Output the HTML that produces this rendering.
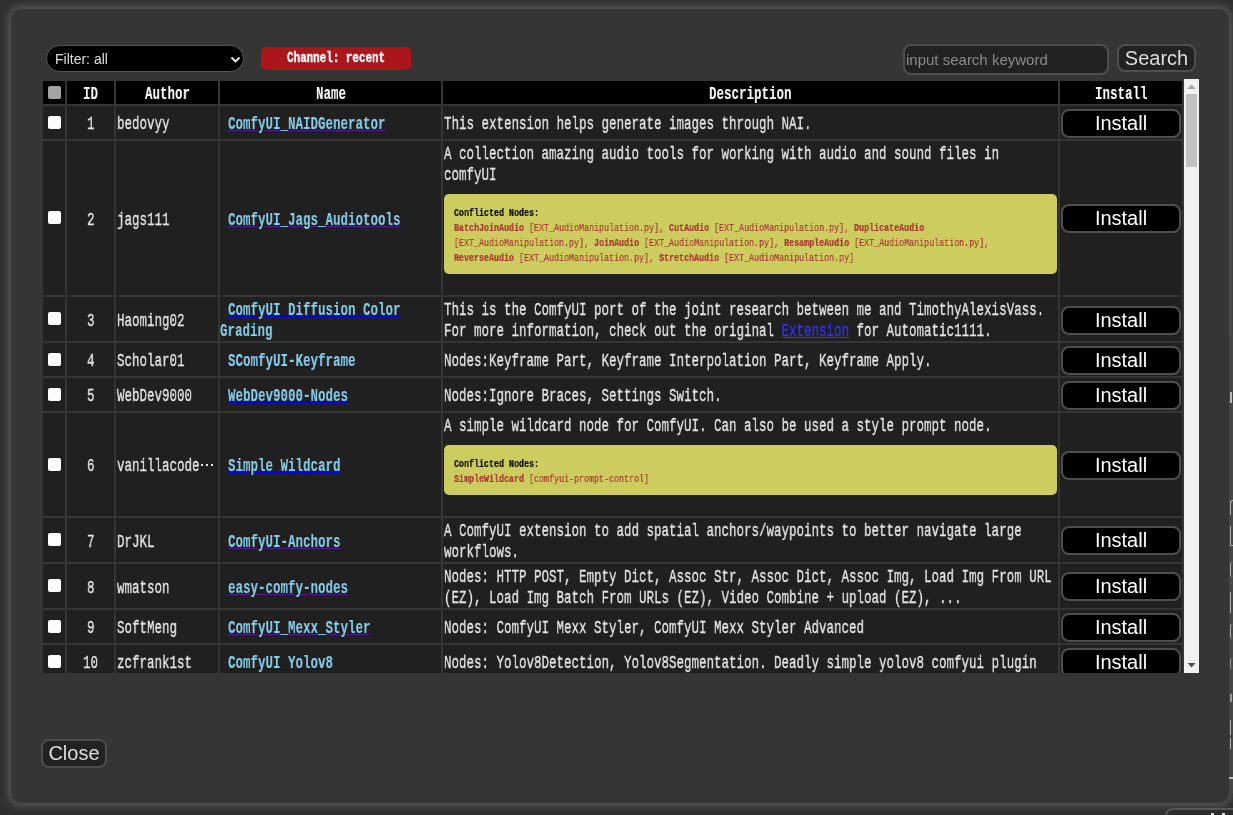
<!DOCTYPE html>
<html><head><meta charset="utf-8">
<style>
html,body{margin:0;padding:0;width:1233px;height:815px;overflow:hidden;background:#2e2e2e;}
#bg{position:absolute;left:0;top:0;width:1233px;height:815px;background:#2f2f2f;}
#dlg{position:absolute;left:11px;top:9px;width:1218px;height:794px;background:#353535;border-radius:10px;box-shadow:0 0 8px 3px rgba(130,130,130,0.5);overflow:hidden;}
.m{position:absolute;white-space:pre;font-family:"Liberation Mono",monospace;line-height:1.1328;transform-origin:0 0;will-change:transform;-webkit-text-stroke:0.35px currentColor;}
.b{position:absolute;}
.ib{position:absolute;left:1061px;width:116px;height:25px;background:#000;border:2px solid #4e4e4e;border-radius:8px;color:#fff;font-family:"Liberation Sans",sans-serif;font-size:20px;line-height:25px;text-align:center;}
.sans{font-family:"Liberation Sans",sans-serif;}
</style></head><body>
<div id="bg"></div>
<div id="dlg"></div>
<div class="b" style="left:1165px;top:808px;width:90px;height:20px;background:#2c2c2c;border:2px solid #575757;border-radius:8px;"></div>
<div class="b" style="left:1211px;top:813px;width:3px;height:2px;background:#ddd;"></div>
<div class="b" style="left:1222px;top:813px;width:3px;height:2px;background:#ddd;"></div>
<div class="b" style="left:1229px;top:335px;width:4px;height:458px;background:#464646;"></div>
<div class="b" style="left:1230px;top:392px;width:2px;height:11px;background:#bbb;"></div>
<div class="b" style="left:1230px;top:500px;width:3px;height:15px;border-left:1.5px solid #aaa;border-top:1.5px solid #aaa;box-sizing:border-box;border-radius:3px 0 0 0;"></div>
<div class="b" style="left:1230px;top:526px;width:3px;height:20px;border-left:1.5px solid #aaa;border-bottom:1.5px solid #aaa;box-sizing:border-box;"></div>
<div class="b" style="left:1230px;top:562px;width:3px;height:15px;border-left:1.5px solid #aaa;border-radius:3px 0 0 3px;box-sizing:border-box;"></div>
<div class="b" style="left:1230px;top:592px;width:3px;height:21px;border-left:1.5px solid #aaa;box-sizing:border-box;"></div>
<div class="b" style="left:1230px;top:624px;width:3px;height:15px;border-left:1.5px solid #aaa;border-radius:3px 0 0 3px;box-sizing:border-box;"></div>
<div class="b" style="left:1230px;top:658px;width:3px;height:11px;border-left:1.5px solid #999;border-radius:3px 0 0 3px;box-sizing:border-box;"></div>
<div class="b" style="left:1230px;top:694px;width:2px;height:8px;background:#999;"></div>
<div class="b" style="left:1230px;top:720px;width:3px;height:15px;border-left:1.5px solid #aaa;box-sizing:border-box;"></div>
<div class="b" style="left:1230px;top:738px;width:3px;height:11px;border-left:1.5px solid #aaa;box-sizing:border-box;"></div>
<div class="b" style="left:1229px;top:777px;width:4px;height:2px;background:#bbb;"></div>

<div style="position:absolute;left:0;top:0;width:1233px;height:815px;will-change:transform;">
<!-- filter select -->
<div class="b" style="left:46px;top:45px;width:196px;height:25px;background:#000;border:1px solid #555;border-radius:14px;"></div>
<div class="b sans" style="left:55px;top:50px;font-size:14px;line-height:18px;color:#ddd;">Filter: all</div>
<svg class="b" style="left:229px;top:55px;" width="13" height="9" viewBox="0 0 13 9"><path d="M2.5 2.5 L6.5 6.5 L10.5 2.5" stroke="#eee" stroke-width="1.8" fill="none"/></svg>
<!-- channel -->
<div class="b" style="left:261px;top:47px;width:150px;height:23px;background:#ab161b;border-radius:5px;"></div>
<div class="m" style="left:287px;top:50.13px;font-size:14.5px;transform:scaleX(0.7517);color:#fff;font-weight:bold;">Channel: recent</div>
<!-- search -->
<div class="b" style="left:903px;top:44px;width:202px;height:27px;background:#222;border:2px solid #4e4e4e;border-radius:8px;"></div>
<div class="b sans" style="left:906px;top:51px;font-size:15px;line-height:18px;color:#8a8a8a;">input search keyword</div>
<div class="b" style="left:1117px;top:44px;width:75px;height:24px;background:#222;border:2px solid #4e4e4e;border-radius:8px;"></div>
<div class="b sans" style="left:1117px;top:44px;width:79px;text-align:center;font-size:20px;line-height:28px;color:#ddd;">Search</div>
<!-- close -->
<div class="b" style="left:41px;top:739px;width:62px;height:25px;background:#222;border:2px solid #4e4e4e;border-radius:8px;"></div>
<div class="b sans" style="left:41px;top:739px;width:66px;text-align:center;font-size:20px;line-height:29px;color:#ddd;">Close</div>
<div class="b" style="left:43px;top:81px;width:22px;height:23px;background:#000;"></div><div class="b" style="left:67px;top:81px;width:47px;height:23px;background:#000;"></div><div class="b" style="left:116px;top:81px;width:102px;height:23px;background:#000;"></div><div class="b" style="left:220px;top:81px;width:221px;height:23px;background:#000;"></div><div class="b" style="left:443px;top:81px;width:615px;height:23px;background:#000;"></div><div class="b" style="left:1060px;top:81px;width:122px;height:23px;background:#000;"></div><div class="m" style="left:83.00px;top:85.13px;font-size:17.5px;transform:scaleX(0.7143);color:#fff;font-weight:bold;-webkit-text-stroke:0.1px currentColor;">ID</div><div class="m" style="left:144.50px;top:85.13px;font-size:17.5px;transform:scaleX(0.7143);color:#fff;font-weight:bold;-webkit-text-stroke:0.1px currentColor;">Author</div><div class="m" style="left:315.50px;top:85.13px;font-size:17.5px;transform:scaleX(0.7143);color:#fff;font-weight:bold;-webkit-text-stroke:0.1px currentColor;">Name</div><div class="m" style="left:709.25px;top:85.13px;font-size:17.5px;transform:scaleX(0.7143);color:#fff;font-weight:bold;-webkit-text-stroke:0.1px currentColor;">Description</div><div class="m" style="left:1094.75px;top:85.13px;font-size:17.5px;transform:scaleX(0.7143);color:#fff;font-weight:bold;-webkit-text-stroke:0.1px currentColor;">Install</div><div class="b" style="left:48px;top:86px;width:13px;height:13px;background:#a3a3a3;border-radius:2px;"></div><div id="clip" style="position:absolute;left:0;top:0;width:1233px;height:673px;overflow:hidden;"><div class="b" style="left:43px;top:106px;width:22px;height:33px;background:#202020;"></div><div class="b" style="left:67px;top:106px;width:47px;height:33px;background:#202020;"></div><div class="b" style="left:116px;top:106px;width:102px;height:33px;background:#202020;"></div><div class="b" style="left:220px;top:106px;width:221px;height:33px;background:#202020;"></div><div class="b" style="left:443px;top:106px;width:615px;height:33px;background:#202020;"></div><div class="b" style="left:1060px;top:106px;width:122px;height:33px;background:#202020;"></div><div class="b" style="left:48px;top:116px;width:13px;height:13px;background:#fff;border-radius:2px;"></div><div class="m" style="left:86.75px;top:115.23px;font-size:17.5px;transform:scaleX(0.7143);color:#e6e6e6;">1</div><div class="m" style="left:117.00px;top:115.23px;font-size:17.5px;transform:scaleX(0.7143);color:#e6e6e6;">bedovyy</div><div class="m" style="left:227.90px;top:115.23px;font-size:17.5px;transform:scaleX(0.7143);color:skyblue;font-weight:bold;-webkit-text-stroke:0.1px currentColor;text-decoration:underline;text-decoration-color:#551A8B;">ComfyUI_NAIDGenerator</div><div class="m" style="left:444.00px;top:115.23px;font-size:17.5px;transform:scaleX(0.7143);color:#e6e6e6;">This extension helps generate images through NAI.</div><div class="ib" style="top:109px;">Install</div><div class="b" style="left:43px;top:141px;width:22px;height:154px;background:#202020;"></div><div class="b" style="left:67px;top:141px;width:47px;height:154px;background:#202020;"></div><div class="b" style="left:116px;top:141px;width:102px;height:154px;background:#202020;"></div><div class="b" style="left:220px;top:141px;width:221px;height:154px;background:#202020;"></div><div class="b" style="left:443px;top:141px;width:615px;height:154px;background:#202020;"></div><div class="b" style="left:1060px;top:141px;width:122px;height:154px;background:#202020;"></div><div class="b" style="left:48px;top:211px;width:13px;height:13px;background:#fff;border-radius:2px;"></div><div class="m" style="left:86.75px;top:210.73px;font-size:17.5px;transform:scaleX(0.7143);color:#e6e6e6;">2</div><div class="m" style="left:117.00px;top:210.73px;font-size:17.5px;transform:scaleX(0.7143);color:#e6e6e6;">jags111</div><div class="m" style="left:227.90px;top:210.73px;font-size:17.5px;transform:scaleX(0.7143);color:skyblue;font-weight:bold;-webkit-text-stroke:0.1px currentColor;text-decoration:underline;text-decoration-color:#551A8B;">ComfyUI_Jags_Audiotools</div><div class="m" style="left:444.00px;top:145.43px;font-size:17.5px;transform:scaleX(0.7143);color:#e6e6e6;">A collection amazing audio tools for working with audio and sound files in</div><div class="m" style="left:444.00px;top:166.43px;font-size:17.5px;transform:scaleX(0.7143);color:#e6e6e6;">comfyUI</div><div class="b" style="left:444px;top:194px;width:613px;height:80px;background:#CCCC5F;border-radius:5px;"></div><div class="m" style="left:454.00px;top:206.54px;font-size:11px;transform:scaleX(0.7576);-webkit-text-stroke:0.15px currentColor;"><span style="color:#000;font-weight:bold;">Conflicted Nodes:</span></div><div class="m" style="left:454.00px;top:221.54px;font-size:11px;transform:scaleX(0.7576);-webkit-text-stroke:0.15px currentColor;"><span style="color:#AA3333;font-weight:bold;">BatchJoinAudio</span><span style="color:#AA3333;"> [EXT_AudioManipulation.py], </span><span style="color:#AA3333;font-weight:bold;">CutAudio</span><span style="color:#AA3333;"> [EXT_AudioManipulation.py], </span><span style="color:#AA3333;font-weight:bold;">DuplicateAudio</span></div><div class="m" style="left:454.00px;top:236.54px;font-size:11px;transform:scaleX(0.7576);-webkit-text-stroke:0.15px currentColor;"><span style="color:#AA3333;">[EXT_AudioManipulation.py], </span><span style="color:#AA3333;font-weight:bold;">JoinAudio</span><span style="color:#AA3333;"> [EXT_AudioManipulation.py], </span><span style="color:#AA3333;font-weight:bold;">ResampleAudio</span><span style="color:#AA3333;"> [EXT_AudioManipulation.py],</span></div><div class="m" style="left:454.00px;top:251.54px;font-size:11px;transform:scaleX(0.7576);-webkit-text-stroke:0.15px currentColor;"><span style="color:#AA3333;font-weight:bold;">ReverseAudio</span><span style="color:#AA3333;"> [EXT_AudioManipulation.py], </span><span style="color:#AA3333;font-weight:bold;">StretchAudio</span><span style="color:#AA3333;"> [EXT_AudioManipulation.py]</span></div><div class="ib" style="top:204px;">Install</div><div class="b" style="left:43px;top:297px;width:22px;height:44px;background:#202020;"></div><div class="b" style="left:67px;top:297px;width:47px;height:44px;background:#202020;"></div><div class="b" style="left:116px;top:297px;width:102px;height:44px;background:#202020;"></div><div class="b" style="left:220px;top:297px;width:221px;height:44px;background:#202020;"></div><div class="b" style="left:443px;top:297px;width:615px;height:44px;background:#202020;"></div><div class="b" style="left:1060px;top:297px;width:122px;height:44px;background:#202020;"></div><div class="b" style="left:48px;top:312px;width:13px;height:13px;background:#fff;border-radius:2px;"></div><div class="m" style="left:86.75px;top:311.73px;font-size:17.5px;transform:scaleX(0.7143);color:#e6e6e6;">3</div><div class="m" style="left:117.00px;top:311.73px;font-size:17.5px;transform:scaleX(0.7143);color:#e6e6e6;">Haoming02</div><div class="m" style="left:227.90px;top:301.43px;font-size:17.5px;transform:scaleX(0.7143);color:skyblue;font-weight:bold;-webkit-text-stroke:0.1px currentColor;text-decoration:underline;text-decoration-color:#0000EE;">ComfyUI Diffusion Color</div><div class="m" style="left:220.40px;top:322.43px;font-size:17.5px;transform:scaleX(0.7143);color:skyblue;font-weight:bold;-webkit-text-stroke:0.1px currentColor;text-decoration:underline;text-decoration-color:#0000EE;">Grading</div><div class="m" style="left:444.00px;top:301.43px;font-size:17.5px;transform:scaleX(0.7143);color:#e6e6e6;">This is the ComfyUI port of the joint research between me and TimothyAlexisVass.</div><div class="m" style="left:444px;top:322.43px;font-size:17.5px;transform:scaleX(0.7143);color:#e6e6e6;">For more information, check out the original <span style="color:#3333ee;text-decoration:underline;">Extension</span> for Automatic1111.</div><div class="ib" style="top:306px;">Install</div><div class="b" style="left:43px;top:343px;width:22px;height:33px;background:#202020;"></div><div class="b" style="left:67px;top:343px;width:47px;height:33px;background:#202020;"></div><div class="b" style="left:116px;top:343px;width:102px;height:33px;background:#202020;"></div><div class="b" style="left:220px;top:343px;width:221px;height:33px;background:#202020;"></div><div class="b" style="left:443px;top:343px;width:615px;height:33px;background:#202020;"></div><div class="b" style="left:1060px;top:343px;width:122px;height:33px;background:#202020;"></div><div class="b" style="left:48px;top:353px;width:13px;height:13px;background:#fff;border-radius:2px;"></div><div class="m" style="left:86.75px;top:352.23px;font-size:17.5px;transform:scaleX(0.7143);color:#e6e6e6;">4</div><div class="m" style="left:117.00px;top:352.23px;font-size:17.5px;transform:scaleX(0.7143);color:#e6e6e6;">Scholar01</div><div class="m" style="left:227.90px;top:352.23px;font-size:17.5px;transform:scaleX(0.7143);color:skyblue;font-weight:bold;-webkit-text-stroke:0.1px currentColor;text-decoration:underline;text-decoration-color:#0000EE;">SComfyUI-Keyframe</div><div class="m" style="left:444.00px;top:352.23px;font-size:17.5px;transform:scaleX(0.7143);color:#e6e6e6;">Nodes:Keyframe Part, Keyframe Interpolation Part, Keyframe Apply.</div><div class="ib" style="top:346px;">Install</div><div class="b" style="left:43px;top:378px;width:22px;height:33px;background:#202020;"></div><div class="b" style="left:67px;top:378px;width:47px;height:33px;background:#202020;"></div><div class="b" style="left:116px;top:378px;width:102px;height:33px;background:#202020;"></div><div class="b" style="left:220px;top:378px;width:221px;height:33px;background:#202020;"></div><div class="b" style="left:443px;top:378px;width:615px;height:33px;background:#202020;"></div><div class="b" style="left:1060px;top:378px;width:122px;height:33px;background:#202020;"></div><div class="b" style="left:48px;top:388px;width:13px;height:13px;background:#fff;border-radius:2px;"></div><div class="m" style="left:86.75px;top:387.23px;font-size:17.5px;transform:scaleX(0.7143);color:#e6e6e6;">5</div><div class="m" style="left:117.00px;top:387.23px;font-size:17.5px;transform:scaleX(0.7143);color:#e6e6e6;">WebDev9000</div><div class="m" style="left:227.90px;top:387.23px;font-size:17.5px;transform:scaleX(0.7143);color:skyblue;font-weight:bold;-webkit-text-stroke:0.1px currentColor;text-decoration:underline;text-decoration-color:#0000EE;">WebDev9000-Nodes</div><div class="m" style="left:444.00px;top:387.23px;font-size:17.5px;transform:scaleX(0.7143);color:#e6e6e6;">Nodes:Ignore Braces, Settings Switch.</div><div class="ib" style="top:381px;">Install</div><div class="b" style="left:43px;top:413px;width:22px;height:103px;background:#202020;"></div><div class="b" style="left:67px;top:413px;width:47px;height:103px;background:#202020;"></div><div class="b" style="left:116px;top:413px;width:102px;height:103px;background:#202020;"></div><div class="b" style="left:220px;top:413px;width:221px;height:103px;background:#202020;"></div><div class="b" style="left:443px;top:413px;width:615px;height:103px;background:#202020;"></div><div class="b" style="left:1060px;top:413px;width:122px;height:103px;background:#202020;"></div><div class="b" style="left:48px;top:458px;width:13px;height:13px;background:#fff;border-radius:2px;"></div><div class="m" style="left:86.75px;top:457.23px;font-size:17.5px;transform:scaleX(0.7143);color:#e6e6e6;">6</div><div class="m" style="left:117.00px;top:457.23px;font-size:17.5px;transform:scaleX(0.7143);color:#e6e6e6;">vanillacode</div><div class="b" style="left:201px;top:464px;width:2px;height:2px;background:#e8e8e8;"></div><div class="b" style="left:206px;top:464px;width:2px;height:2px;background:#e8e8e8;"></div><div class="b" style="left:211px;top:464px;width:2px;height:2px;background:#e8e8e8;"></div><div class="m" style="left:227.90px;top:457.23px;font-size:17.5px;transform:scaleX(0.7143);color:skyblue;font-weight:bold;-webkit-text-stroke:0.1px currentColor;text-decoration:underline;text-decoration-color:#0000EE;">Simple Wildcard</div><div class="m" style="left:444.00px;top:417.43px;font-size:17.5px;transform:scaleX(0.7143);color:#e6e6e6;">A simple wildcard node for ComfyUI. Can also be used a style prompt node.</div><div class="b" style="left:444px;top:445px;width:613px;height:50px;background:#CCCC5F;border-radius:5px;"></div><div class="m" style="left:454.00px;top:457.54px;font-size:11px;transform:scaleX(0.7576);-webkit-text-stroke:0.15px currentColor;"><span style="color:#000;font-weight:bold;">Conflicted Nodes:</span></div><div class="m" style="left:454.00px;top:472.54px;font-size:11px;transform:scaleX(0.7576);-webkit-text-stroke:0.15px currentColor;"><span style="color:#AA3333;font-weight:bold;">SimpleWildcard</span><span style="color:#AA3333;"> [comfyui-prompt-control]</span></div><div class="ib" style="top:451px;">Install</div><div class="b" style="left:43px;top:518px;width:22px;height:44px;background:#202020;"></div><div class="b" style="left:67px;top:518px;width:47px;height:44px;background:#202020;"></div><div class="b" style="left:116px;top:518px;width:102px;height:44px;background:#202020;"></div><div class="b" style="left:220px;top:518px;width:221px;height:44px;background:#202020;"></div><div class="b" style="left:443px;top:518px;width:615px;height:44px;background:#202020;"></div><div class="b" style="left:1060px;top:518px;width:122px;height:44px;background:#202020;"></div><div class="b" style="left:48px;top:533px;width:13px;height:13px;background:#fff;border-radius:2px;"></div><div class="m" style="left:86.75px;top:532.73px;font-size:17.5px;transform:scaleX(0.7143);color:#e6e6e6;">7</div><div class="m" style="left:117.00px;top:532.73px;font-size:17.5px;transform:scaleX(0.7143);color:#e6e6e6;">DrJKL</div><div class="m" style="left:227.90px;top:532.73px;font-size:17.5px;transform:scaleX(0.7143);color:skyblue;font-weight:bold;-webkit-text-stroke:0.1px currentColor;text-decoration:underline;text-decoration-color:#551A8B;">ComfyUI-Anchors</div><div class="m" style="left:444.00px;top:522.43px;font-size:17.5px;transform:scaleX(0.7143);color:#e6e6e6;">A ComfyUI extension to add spatial anchors/waypoints to better navigate large</div><div class="m" style="left:444.00px;top:543.43px;font-size:17.5px;transform:scaleX(0.7143);color:#e6e6e6;">workflows.</div><div class="ib" style="top:526px;">Install</div><div class="b" style="left:43px;top:564px;width:22px;height:44px;background:#202020;"></div><div class="b" style="left:67px;top:564px;width:47px;height:44px;background:#202020;"></div><div class="b" style="left:116px;top:564px;width:102px;height:44px;background:#202020;"></div><div class="b" style="left:220px;top:564px;width:221px;height:44px;background:#202020;"></div><div class="b" style="left:443px;top:564px;width:615px;height:44px;background:#202020;"></div><div class="b" style="left:1060px;top:564px;width:122px;height:44px;background:#202020;"></div><div class="b" style="left:48px;top:579px;width:13px;height:13px;background:#fff;border-radius:2px;"></div><div class="m" style="left:86.75px;top:578.73px;font-size:17.5px;transform:scaleX(0.7143);color:#e6e6e6;">8</div><div class="m" style="left:117.00px;top:578.73px;font-size:17.5px;transform:scaleX(0.7143);color:#e6e6e6;">wmatson</div><div class="m" style="left:227.90px;top:578.73px;font-size:17.5px;transform:scaleX(0.7143);color:skyblue;font-weight:bold;-webkit-text-stroke:0.1px currentColor;text-decoration:underline;text-decoration-color:#551A8B;">easy-comfy-nodes</div><div class="m" style="left:444.00px;top:568.43px;font-size:17.5px;transform:scaleX(0.7143);color:#e6e6e6;">Nodes: HTTP POST, Empty Dict, Assoc Str, Assoc Dict, Assoc Img, Load Img From URL</div><div class="m" style="left:444.00px;top:589.43px;font-size:17.5px;transform:scaleX(0.7143);color:#e6e6e6;">(EZ), Load Img Batch From URLs (EZ), Video Combine + upload (EZ), ...</div><div class="ib" style="top:572px;">Install</div><div class="b" style="left:43px;top:610px;width:22px;height:33px;background:#202020;"></div><div class="b" style="left:67px;top:610px;width:47px;height:33px;background:#202020;"></div><div class="b" style="left:116px;top:610px;width:102px;height:33px;background:#202020;"></div><div class="b" style="left:220px;top:610px;width:221px;height:33px;background:#202020;"></div><div class="b" style="left:443px;top:610px;width:615px;height:33px;background:#202020;"></div><div class="b" style="left:1060px;top:610px;width:122px;height:33px;background:#202020;"></div><div class="b" style="left:48px;top:620px;width:13px;height:13px;background:#fff;border-radius:2px;"></div><div class="m" style="left:86.75px;top:619.23px;font-size:17.5px;transform:scaleX(0.7143);color:#e6e6e6;">9</div><div class="m" style="left:117.00px;top:619.23px;font-size:17.5px;transform:scaleX(0.7143);color:#e6e6e6;">SoftMeng</div><div class="m" style="left:227.90px;top:619.23px;font-size:17.5px;transform:scaleX(0.7143);color:skyblue;font-weight:bold;-webkit-text-stroke:0.1px currentColor;text-decoration:underline;text-decoration-color:#551A8B;">ComfyUI_Mexx_Styler</div><div class="m" style="left:444.00px;top:619.23px;font-size:17.5px;transform:scaleX(0.7143);color:#e6e6e6;">Nodes: ComfyUI Mexx Styler, ComfyUI Mexx Styler Advanced</div><div class="ib" style="top:613px;">Install</div><div class="b" style="left:43px;top:645px;width:22px;height:45px;background:#202020;"></div><div class="b" style="left:67px;top:645px;width:47px;height:45px;background:#202020;"></div><div class="b" style="left:116px;top:645px;width:102px;height:45px;background:#202020;"></div><div class="b" style="left:220px;top:645px;width:221px;height:45px;background:#202020;"></div><div class="b" style="left:443px;top:645px;width:615px;height:45px;background:#202020;"></div><div class="b" style="left:1060px;top:645px;width:122px;height:45px;background:#202020;"></div><div class="b" style="left:48px;top:655px;width:13px;height:13px;background:#fff;border-radius:2px;"></div><div class="m" style="left:83.00px;top:654.23px;font-size:17.5px;transform:scaleX(0.7143);color:#e6e6e6;">10</div><div class="m" style="left:117.00px;top:654.23px;font-size:17.5px;transform:scaleX(0.7143);color:#e6e6e6;">zcfrank1st</div><div class="m" style="left:227.90px;top:654.23px;font-size:17.5px;transform:scaleX(0.7143);color:skyblue;font-weight:bold;-webkit-text-stroke:0.1px currentColor;text-decoration:underline;text-decoration-color:#0000EE;">ComfyUI Yolov8</div><div class="m" style="left:444.00px;top:654.23px;font-size:17.5px;transform:scaleX(0.7143);color:#e6e6e6;">Nodes: Yolov8Detection, Yolov8Segmentation. Deadly simple yolov8 comfyui plugin</div><div class="ib" style="top:648px;">Install</div></div>
<!-- scrollbar -->
<div class="b" style="left:1184px;top:79px;width:15px;height:594px;background:#f1f1f1;"></div>
<div class="b" style="left:1186px;top:94px;width:11px;height:73px;background:#c1c1c1;"></div>
<svg class="b" style="left:1184px;top:79px;" width="15" height="15"><path d="M3.5 10 L7.5 5.5 L11.5 10 Z" fill="#a3a3a3"/></svg>
<svg class="b" style="left:1184px;top:658px;" width="15" height="15"><path d="M3.5 5 L7.5 9.5 L11.5 5 Z" fill="#505050"/></svg>
</div>
</body></html>
